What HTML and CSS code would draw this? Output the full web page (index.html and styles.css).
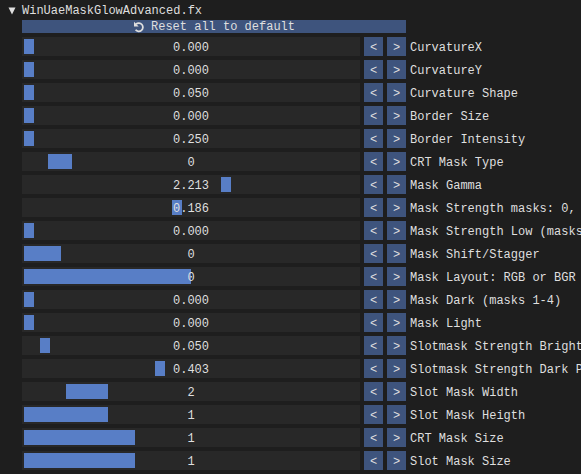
FILE: index.html
```html
<!DOCTYPE html>
<html lang="en">
<head>
<meta charset="utf-8">
<title>WinUaeMaskGlowAdvanced.fx</title>
<link rel="stylesheet" href="styles.css">
</head>
<body>
<details class="effect" open>
  <summary class="effect-title"><svg class="arrow" viewBox="0 0 8 8" aria-hidden="true"><path d="M0.5 0.5h7L4 7.5z"/></svg>WinUaeMaskGlowAdvanced.fx</summary>
  <div class="panel" id="panel">
    <button class="reset" type="button"><svg class="undo" viewBox="0 0 12 12" aria-hidden="true"><path class="undo-arc" d="M3 3.2A4.1 4.1 0 1 1 2.6 8.8"/><path class="undo-head" d="M1 .8v4.7h4.7z"/></svg>Reset all to default</button>
  </div>
</details>
<script src="script.js"></script>
</body>
</html>
```
FILE: styles.css
```css
* {
  box-sizing: border-box;
}

body {
  margin: 0;
  background: #1e1e1e;
  color: #dfdfdf;
  font: 12px/15px "Liberation Mono", monospace;
  overflow: hidden;
}

.effect {
  padding-top: 3px;
}

.effect-title {
  display: flex;
  align-items: center;
  gap: 6px;
  padding-left: 8px;
  line-height: 16px;
  list-style: none;
}

.arrow {
  width: 8px;
  height: 8px;
  fill: currentColor;
}

.panel {
  display: grid;
  grid-template-columns: minmax(0, 1fr) 19px 19px 171px;
  gap: 4px;
  padding: 1px 0 4px 22px;
}

button {
  margin: 0;
  padding: 0;
  border: 0;
  background: #3e547d;
  color: inherit;
  font: inherit;
}

.reset {
  grid-column: 1 / 4;
  display: flex;
  justify-content: center;
  align-items: center;
  gap: 6px;
  height: 13px;
  padding-top: 2px;
}

.undo {
  align-self: flex-end;
  width: 12px;
  height: 12px;
}

.undo-arc {
  fill: none;
  stroke: currentColor;
  stroke-width: 1.8;
}

.undo-head {
  fill: currentColor;
}

.row {
  display: contents;
}

.slider {
  grid-column: 1;
  display: grid;
  height: 19px;
  background: #282828;
}

.slider > * {
  grid-area: 1 / 1;
}

.range {
  appearance: none;
  width: 100%;
  height: 19px;
  margin: 0;
  padding: 2px;
  background: none;
}

.range::-webkit-slider-thumb {
  appearance: none;
  width: var(--grab, 10px);
  height: 15px;
  border-radius: 0;
  background: #587ec6;
}

.value {
  z-index: 1;
  place-self: center;
  padding-top: 4px;
  pointer-events: none;
}

.step {
  height: 19px;
  padding-top: 4px;
}

.name {
  align-self: center;
  padding-top: 4px;
  white-space: nowrap;
}
```
FILE: script.js
```js
// label, shown value, min, max, value, whether the slider takes whole steps
const settings = [
  ["CurvatureX", "0.000", 0, 1, 0],
  ["CurvatureY", "0.000", 0, 1, 0],
  ["Curvature Shape", "0.050", 0.05, 1, 0.05],
  ["Border Size", "0.000", 0, 1, 0],
  ["Border Intensity", "0.250", 0.25, 1, 0.25],
  ["CRT Mask Type", "0", -1, 12, 0, true],
  ["Mask Gamma", "2.213", 1, 3, 2.213],
  ["Mask Strength masks: 0,", "0.186", -0.5, 1, 0.186],
  ["Mask Strength Low (masks", "0.000", 0, 1, 0],
  ["Mask Shift/Stagger", "0", 0, 8, 0, true],
  ["Mask Layout: RGB or BGR", "0", 0, 1, 0, true],
  ["Mask Dark (masks 1-4)", "0.000", 0, 1, 0],
  ["Mask Light", "0.000", 0, 1, 0],
  ["Slotmask Strength Bright", "0.050", 0, 1, 0.05],
  ["Slotmask Strength Dark P", "0.403", 0, 1, 0.403],
  ["Slot Mask Width", "2", 1, 8, 2, true],
  ["Slot Mask Heigth", "1", 1, 4, 1, true],
  ["CRT Mask Size", "1", 1, 3, 1, true],
  ["Slot Mask Size", "1", 1, 3, 1, true]
];

const panel = document.getElementById("panel");
settings.forEach(([name, text, min, max, value, whole], i) => {
  const row = document.createElement("div");
  row.className = "row";
  // whole-number sliders have a grab as wide as one step
  const grab = whole ? `style="--grab: ${100 / (max - min + 1)}%"` : "";
  row.innerHTML = `
    <div class="slider">
      <input class="range" id="s${i}" type="range" min="${min}" max="${max}" step="${whole ? 1 : "any"}" value="${value}" ${grab}>
      <output class="value" for="s${i}">${text}</output>
    </div>
    <button class="step" type="button" aria-label="Decrease ${name}">&lt;</button>
    <button class="step" type="button" aria-label="Increase ${name}">&gt;</button>
    <label class="name" for="s${i}">${name}</label>`;
  panel.append(row);
});
```
